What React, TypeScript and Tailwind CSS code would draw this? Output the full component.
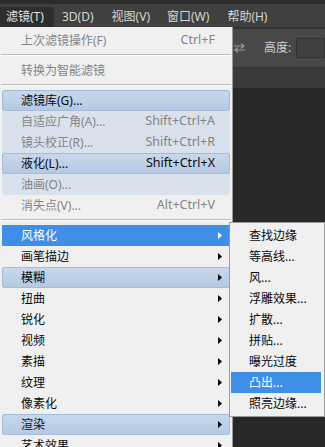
import React from "react";

const FONT = { fontFamily: '"Noto Sans", "Noto Sans CJK SC", sans-serif' };

function Arrow({ white = false }: { white?: boolean }) {
  return (
    <svg width="4" height="7" viewBox="0 0 4 7" className="block">
      <polygon points="0,0 4,3.5 0,7" fill={white ? "#ffffff" : "#000000"} />
    </svg>
  );
}

type Row = {
  label: string;
  shortcut?: string;
  disabled?: boolean;
  sub?: boolean;
  style?: "strong" | "selected" | "none";
};

function MenuRow({ r, inGroup = false }: { r: Row; inGroup?: boolean }) {
  const base = "h-[21px] flex items-center text-[12px] leading-none";
  const color =
    r.style === "selected" ? "text-white" : r.disabled ? "text-[#848484]" : "text-[#0a0a0a]";
  let deco = "";
  if (r.style === "strong")
    deco =
      "rounded-[3px] bg-gradient-to-b from-[#c9d8ec] to-[#b4c8e2] shadow-[inset_0_0_0_1px_#a5bbd9]";
  if (r.style === "selected") deco = "bg-[#3f8fe8]";
  const mx = inGroup ? "" : "mx-[2px]";
  const pl = inGroup ? "pl-[19px]" : "pl-[19px]";
  return (
    <div className={`${base} ${color} ${deco} ${mx} ${pl} pr-[8px]`}>
      <span className="flex-1 whitespace-nowrap">{r.label}</span>
      {r.shortcut && <span className="whitespace-nowrap pr-[7px] text-[12.5px]">{r.shortcut}</span>}
      {r.sub && (
        <span className="pr-[0px]">
          <Arrow white={r.style === "selected"} />
        </span>
      )}
    </div>
  );
}

function Sep() {
  return (
    <div className="h-[9px] pt-[3px] px-[1px]">
      <div className="h-px bg-[#bcbcbc]" />
      <div className="h-px bg-[#fbfbfb]" />
    </div>
  );
}

export default function App() {
  const group: Row[] = [
    { label: "滤镜库(G)...", style: "strong" },
    { label: "自适应广角(A)...", shortcut: "Shift+Ctrl+A", disabled: true },
    { label: "镜头校正(R)...", shortcut: "Shift+Ctrl+R", disabled: true },
    { label: "液化(L)...", shortcut: "Shift+Ctrl+X", style: "strong" },
    { label: "油画(O)...", disabled: true },
  ];
  const subs: Row[] = [
    { label: "风格化", sub: true, style: "selected" },
    { label: "画笔描边", sub: true },
    { label: "模糊", sub: true, style: "strong" },
    { label: "扭曲", sub: true },
    { label: "锐化", sub: true },
    { label: "视频", sub: true },
    { label: "素描", sub: true },
    { label: "纹理", sub: true },
    { label: "像素化", sub: true },
    { label: "渲染", sub: true, style: "strong" },
    { label: "艺术效果", sub: true },
  ];
  const sub2 = [
    "查找边缘",
    "等高线...",
    "风...",
    "浮雕效果...",
    "扩散...",
    "拼贴...",
    "曝光过度",
    "凸出...",
    "照亮边缘...",
  ];

  return (
    <div className="relative w-[325px] h-[447px] overflow-hidden bg-[#282828] flex flex-col" style={FONT}>
      {/* top strip */}
      <div className="h-[4px] bg-[#2b2b2b]" />
      {/* menubar */}
      <div className="h-[23px] bg-[#404040] flex items-end text-[12px] text-[#d6d6d6] leading-none">
        <div className="h-[20px] w-[54px] pl-[6px] flex items-center bg-[#2e2e2e] text-[#e2e2e2]">滤镜(T)</div>
        <div className="h-[20px] flex items-center ml-[8px]">3D(D)</div>
        <div className="h-[20px] flex items-center ml-[18px]">视图(V)</div>
        <div className="h-[20px] flex items-center ml-[17px]">窗口(W)</div>
        <div className="h-[20px] flex items-center ml-[18px]">帮助(H)</div>
      </div>
      {/* options bar */}
      <div className="h-[2px] bg-[#333333]" />
      <div className="h-[38px] bg-[#484848] flex items-center">
        <div className="ml-[233px] w-[13px] flex items-center">
          <svg width="13" height="10" viewBox="0 0 13 10">
            <path d="M1 3h10M8 0.5l3 2.5-3 2.5" stroke="#9b9b9b" strokeWidth="1.2" fill="none" />
            <path d="M12 7H2M5 4.5L2 7l3 2.5" stroke="#9b9b9b" strokeWidth="1.2" fill="none" />
          </svg>
        </div>
        <span className="ml-[18px] text-[12px] text-[#cfcfcf] leading-none">高度:</span>
        <div className="ml-[5px] h-[20px] flex-1 bg-[#404040] border border-[#333333]" />
      </div>
      <div className="h-[1px] bg-[#343434]" />
      <div className="h-[20px] bg-[#3a3a3a]" />
      <div className="flex-1 bg-[#282828]" />

      {/* dropdown menu */}
      <div className="absolute left-0 top-[27px] w-[233px] h-[430px] bg-[#f0f0f0] border-r border-[#9a9a9a] pt-[3px]">
        <MenuRow r={{ label: "上次滤镜操作(F)", shortcut: "Ctrl+F", disabled: true }} />
        <Sep />
        <MenuRow r={{ label: "转换为智能滤镜", disabled: true }} />
        <Sep />
        <div className="mx-[2px] rounded-[3px] bg-[#d8e1ec]">
          {group.map((r) => (
            <MenuRow key={r.label} r={r} inGroup />
          ))}
        </div>
        <MenuRow r={{ label: "消失点(V)...", shortcut: "Alt+Ctrl+V", disabled: true }} />
        <Sep />
        {subs.map((r) => (
          <MenuRow key={r.label} r={r} />
        ))}
      </div>

      {/* submenu */}
      <div className="absolute left-[229px] top-[222px] w-[96px] h-[195px] bg-[#f0f0f0] border border-[#9a9a9a] pt-[2px]">
        {sub2.map((s) => (
          <div
            key={s}
            className={`h-[21px] flex items-center pl-[18px] ml-[1px] mr-[3px] text-[12px] leading-none whitespace-nowrap ${
              s === "凸出..." ? "bg-[#3f8fe8] text-white" : "text-[#0a0a0a]"
            }`}
          >
            {s}
          </div>
        ))}
      </div>
    </div>
  );
}
